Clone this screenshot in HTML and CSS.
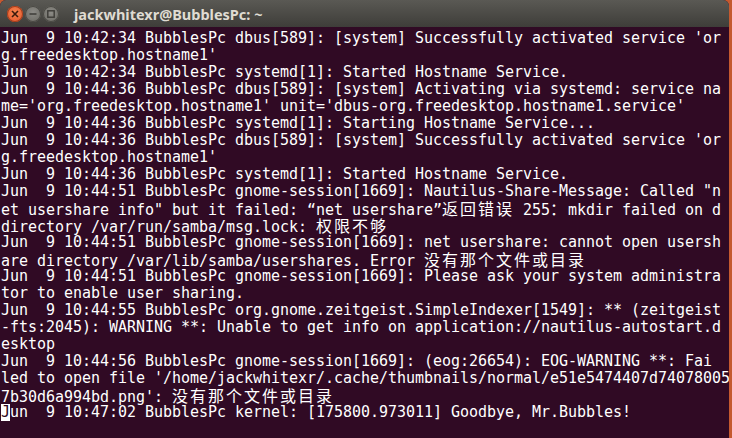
FILE: index.html
```html
<!DOCTYPE html>
<html lang="en">
<head>
  <meta charset="UTF-8">
  <title>jackwhitexr@BubblesPc: ~</title>
  <link rel="stylesheet" href="styles.css">
</head>
<body>
  <div class="window">
    <div class="titlebar">
      <div class="buttons">
        <span class="btn close">
          <svg width="8" height="8" viewBox="0 0 8 8"><path d="M1 1L7 7M7 1L1 7" stroke="#3a1a0c" stroke-width="1.6"/></svg>
        </span>
        <span class="btn">
          <svg width="8" height="8" viewBox="0 0 8 8"><path d="M0.5 4H7.5" stroke="#3c3b37" stroke-width="1.6"/></svg>
        </span>
        <span class="btn">
          <svg width="8" height="8" viewBox="0 0 8 8"><rect x="0.8" y="0.8" width="6.4" height="6.4" fill="none" stroke="#3c3b37" stroke-width="1.4"/></svg>
        </span>
      </div>
      <div class="title">jackwhitexr@BubblesPc: ~</div>
    </div>
    <div class="term">
<div class="line">Jun  9 10:42:34 BubblesPc dbus[589]: [system] Successfully activated service 'or</div>
<div class="line">g.freedesktop.hostname1'</div>
<div class="line">Jun  9 10:42:34 BubblesPc systemd[1]: Started Hostname Service.</div>
<div class="line">Jun  9 10:44:36 BubblesPc dbus[589]: [system] Activating via systemd: service na</div>
<div class="line">me='org.freedesktop.hostname1' unit='dbus-org.freedesktop.hostname1.service'</div>
<div class="line">Jun  9 10:44:36 BubblesPc systemd[1]: Starting Hostname Service...</div>
<div class="line">Jun  9 10:44:36 BubblesPc dbus[589]: [system] Successfully activated service 'or</div>
<div class="line">g.freedesktop.hostname1'</div>
<div class="line">Jun  9 10:44:36 BubblesPc systemd[1]: Started Hostname Service.</div>
<div class="line">Jun  9 10:44:51 BubblesPc gnome-session[1669]: Nautilus-Share-Message: Called "n</div>
<div class="line">et usershare info" but it failed: “net usershare”<span class="w">返回错误</span> 255<span class="w">：</span>mkdir failed on d</div>
<div class="line">directory /var/run/samba/msg.lock: <span class="w">权限不够</span></div>
<div class="line">Jun  9 10:44:51 BubblesPc gnome-session[1669]: net usershare: cannot open usersh</div>
<div class="line">are directory /var/lib/samba/usershares. Error <span class="w">没有那个文件或目录</span></div>
<div class="line">Jun  9 10:44:51 BubblesPc gnome-session[1669]: Please ask your system administra</div>
<div class="line">tor to enable user sharing.</div>
<div class="line">Jun  9 10:44:55 BubblesPc org.gnome.zeitgeist.SimpleIndexer[1549]: ** (zeitgeist</div>
<div class="line">-fts:2045): WARNING **: Unable to get info on application://nautilus-autostart.d</div>
<div class="line">esktop</div>
<div class="line">Jun  9 10:44:56 BubblesPc gnome-session[1669]: (eog:26654): EOG-WARNING **: Fai</div>
<div class="line">led to open file '/home/jackwhitexr/.cache/thumbnails/normal/e51e5474407d74078005</div>
<div class="line">7b30d6a994bd.png': <span class="w">没有那个文件或目录</span></div>
<div class="line"><span class="cursor">J</span>un  9 10:47:02 BubblesPc kernel: [175800.973011] Goodbye, Mr.Bubbles!</div>
    </div>
  </div>
</body>
</html>
```

FILE: styles.css
```css
*{
  margin:0;
  padding:0;
}
body{
  width:732px;
  height:438px;
  overflow:hidden;
  background:#c4592f;
}
.window{
  width:729px;
  height:438px;
  background:#300a24;
  border-radius:6px 6px 0 0;
  overflow:hidden;
}
.titlebar{
  height:27px;
  display:flex;
  align-items:center;
  background:linear-gradient(#5a5954, #3e3d39);
}
.buttons{
  display:flex;
  gap:2px;
  padding-left:7px;
}
.btn{
  width:16px;
  height:16px;
  border-radius:50%;
  display:flex;
  align-items:center;
  justify-content:center;
  background:radial-gradient(circle at 50% 40%, #8c8b86, #67665f);
  box-shadow:inset 0 0 0 1px #4a4944;
}
.btn.close{
  background:radial-gradient(circle at 50% 40%, #f7844e, #e0532a);
  box-shadow:inset 0 0 0 1px #a13d1c;
}
.title{
  margin-left:15px;
  font-family:"Noto Sans", sans-serif;
  font-weight:bold;
  font-size:14.5px;
  color:#dfdbd2;
}
.term{
  padding:3px 0 0 1px;
  font-family:"DejaVu Sans Mono", monospace;
  font-size:15px;
  letter-spacing:-0.03px;
  line-height:17px;
  color:#ffffff;
}
.line{
  white-space:pre;
  height:17px;
}
.w{
  display:inline-block;
  height:17px;
  line-height:17px;
  font-family:"Noto Sans CJK SC", sans-serif;
  font-size:16px;
  letter-spacing:2px;
}
.cursor{
  display:inline-block;
  height:17px;
  line-height:17px;
  vertical-align:top;
  background:#ffffff;
  color:#300a24;
}
```
